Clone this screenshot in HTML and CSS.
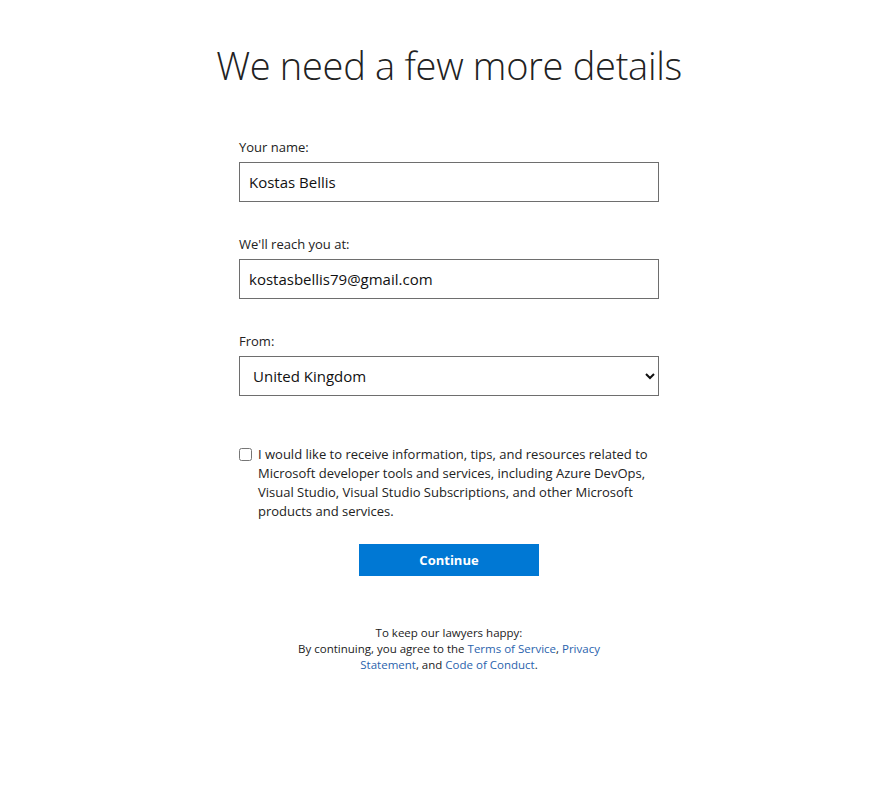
FILE: index.html
```html
<!DOCTYPE html>
<html lang="en">
<head>
  <meta charset="UTF-8" />
  <meta name="viewport" content="width=device-width, initial-scale=1.0"/>
  <title>We need a few more details</title>
  <link rel="stylesheet" href="styles.css">
</head>
<body>
  <div class="page">
    <div class="profile">
      <h1 class="title">We need a few more details</h1>

      <form class="details-form" onsubmit="return false">
        <div class="field">
          <label for="name">Your name:</label>
          <input type="text" id="name" value="Kostas Bellis" />
        </div>

        <div class="field">
          <label for="email">We'll reach you at:</label>
          <input type="text" id="email" value="kostasbellis79@gmail.com" />
        </div>

        <div class="field">
          <label for="country">From:</label>
          <select id="country">
            <option>United States</option>
            <option selected>United Kingdom</option>
            <option>Greece</option>
          </select>
        </div>

        <label class="consent">
          <input type="checkbox" />
          <span>I would like to receive information, tips, and resources related to Microsoft developer tools and services, including Azure DevOps, Visual Studio, Visual Studio Subscriptions, and other Microsoft products and services.</span>
        </label>

        <div class="actions">
          <button type="submit">Continue</button>
        </div>
      </form>

      <div class="legal">
        <p>To keep our lawyers happy:</p>
        <p>By continuing, you agree to the <a href="#">Terms of Service</a>, <a href="#">Privacy Statement</a>, and <a href="#">Code of Conduct</a>.</p>
      </div>
    </div>
  </div>
</body>
</html>
```

FILE: styles.css
```css
body {
  margin: 0;
  font-family: "Open Sans", "Noto Sans", sans-serif;
  background: #fff;
  color: #333;
}

.page {
  display: flex;
  justify-content: center;
  padding-left: 16px;
}

.profile {
  width: 420px;
  display: flex;
  flex-direction: column;
  align-items: center;
}

.title {
  margin: 39px 0 0;
  font-size: 38px;
  font-weight: 300;
  color: #222;
  white-space: nowrap;
  letter-spacing: -0.3px;
}

.details-form {
  width: 100%;
  margin-top: 47px;
}

.field {
  display: flex;
  flex-direction: column;
  margin-bottom: 33px;
}

.field label {
  font-size: 13px;
  color: #222;
  line-height: 18px;
  margin-bottom: 6px;
}

.field input,
.field select {
  box-sizing: border-box;
  height: 40px;
  width: 100%;
  border: 1px solid #6e6e6e;
  border-radius: 0;
  background: #fff;
  font-family: inherit;
  font-size: 15px;
  color: #111;
  padding: 0 9px;
  outline: none;
}

.consent {
  display: flex;
  align-items: flex-start;
  gap: 6px;
  margin-top: 49px;
  font-size: 13px;
  line-height: 19px;
  color: #222;
}

.consent input {
  margin: 3px 0 0;
  width: 13px;
  height: 13px;
  flex-shrink: 0;
}

.actions {
  display: flex;
  justify-content: center;
  margin-top: 23px;
}

.actions button {
  width: 180px;
  height: 32px;
  border: none;
  background: #0078d4;
  color: #fff;
  font-family: inherit;
  font-size: 13px;
  font-weight: 700;
  cursor: pointer;
}

.legal {
  margin-top: 49px;
  width: 310px;
  text-align: center;
  font-size: 11.5px;
  line-height: 16px;
  color: #222;
}

.legal p {
  margin: 0;
}

.legal a {
  color: #2a63ad;
  text-decoration: none;
}
```
